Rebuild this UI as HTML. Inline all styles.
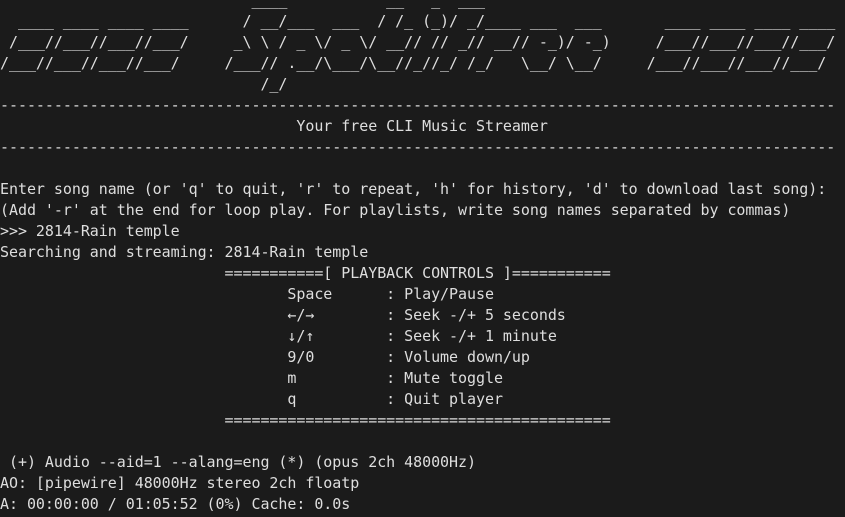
<!DOCTYPE html>
<html><head><meta charset="utf-8"><style>
html,body{margin:0;padding:0;background:#1b1b1b;width:845px;height:517px;overflow:hidden}
pre{margin:0;position:absolute;top:-10px;left:0;font-family:"DejaVu Sans Mono","Liberation Mono",monospace;font-size:15px;letter-spacing:-0.05px;line-height:21px;color:#dedede;white-space:pre}
</style></head><body><pre>                            ____           __   _  ___
  ____ ____ ____ ____      / __/___  ___  / /_ (_)/ _/____ ___  ___       ____ ____ ____ ____
 /___//___//___//___/     _\ \ / _ \/ _ \/ __// // _// __// -_)/ -_)     /___//___//___//___/
/___//___//___//___/     /___// .__/\___/\__//_//_/ /_/   \__/ \__/     /___//___//___//___/
                             /_/
---------------------------------------------------------------------------------------------
                                 Your free CLI Music Streamer
---------------------------------------------------------------------------------------------

Enter song name (or 'q' to quit, 'r' to repeat, 'h' for history, 'd' to download last song):
(Add '-r' at the end for loop play. For playlists, write song names separated by commas)
&gt;&gt;&gt; 2814-Rain temple
Searching and streaming: 2814-Rain temple
                         ===========[ PLAYBACK CONTROLS ]===========
                                Space      : Play/Pause
                                ←/→        : Seek -/+ 5 seconds
                                ↓/↑        : Seek -/+ 1 minute
                                9/0        : Volume down/up
                                m          : Mute toggle
                                q          : Quit player
                         ===========================================

 (+) Audio --aid=1 --alang=eng (*) (opus 2ch 48000Hz)
AO: [pipewire] 48000Hz stereo 2ch floatp
A: 00:00:00 / 01:05:52 (0%) Cache: 0.0s</pre></body></html>
